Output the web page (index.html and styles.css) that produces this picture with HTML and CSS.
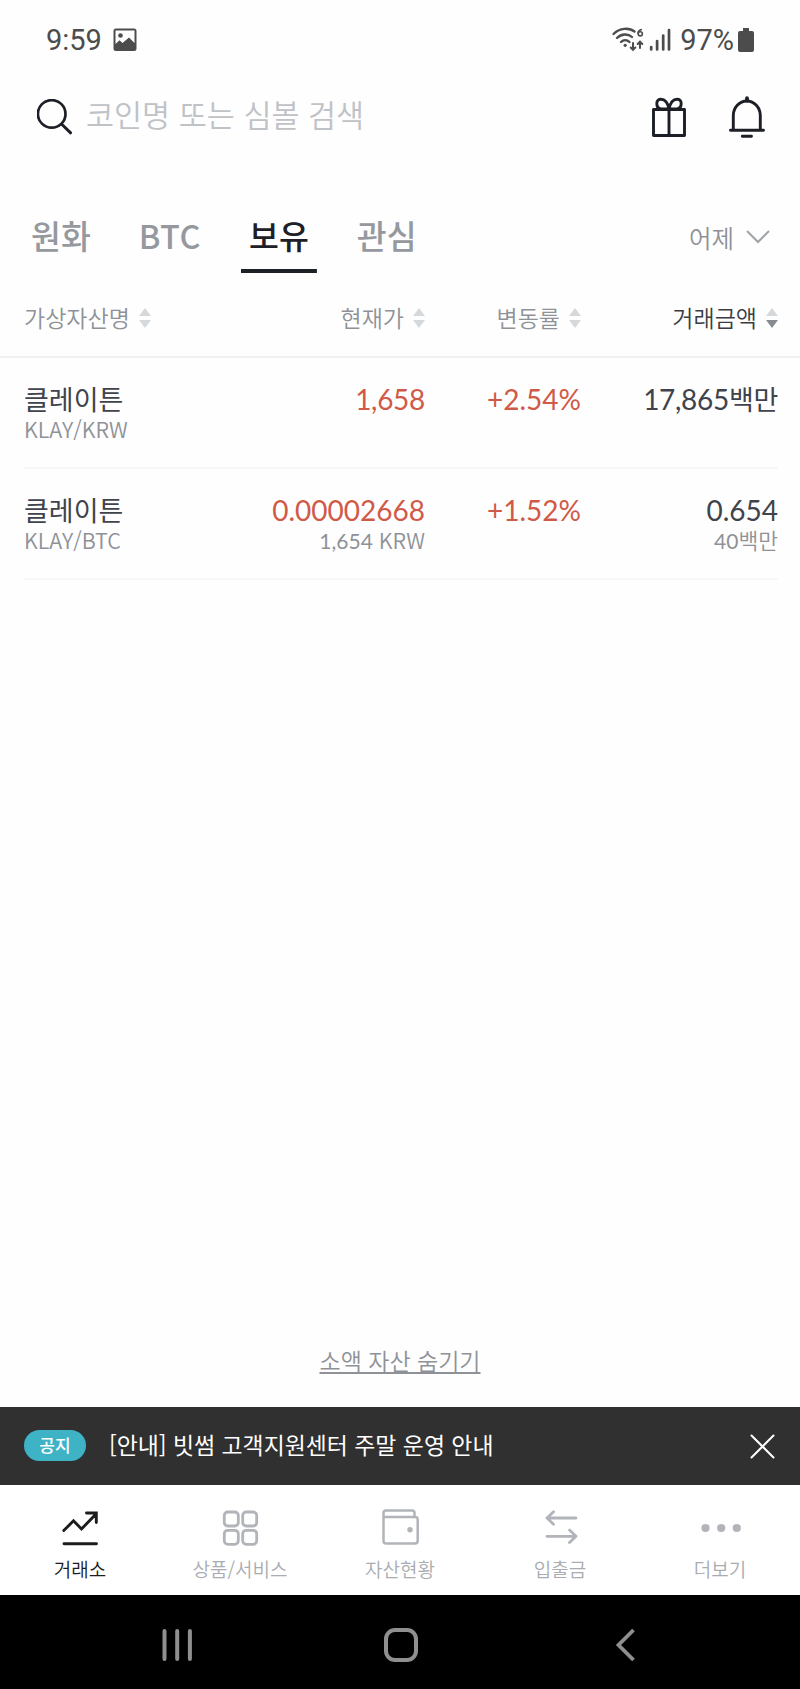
FILE: index.html
```html
<!DOCTYPE html>
<html lang="ko">
<head>
    <meta charset="UTF-8">
    <meta name="viewport" content="width=device-width, initial-scale=1.0">
    <title>거래소</title>
    <link rel="stylesheet" href="styles.css">
</head>
<body>
    <div class="app">
        <!-- Status bar -->
        <div class="status-bar">
            <span class="clock">9:59</span>
            <svg class="status-image" width="24" height="24" viewBox="0 0 24 24">
                <path fill="#4c4c4c" fill-rule="evenodd" d="M3 .5h18A2.500 2.500 0 0 1 23.500 3v17.500A2.500 2.500 0 0 1 21 23H3A2.500 2.500 0 0 1 .5 20.500V3A2.500 2.500 0 0 1 3 .5zM2.500 2.500v13.500l4-3.700 3 2.700 6.500-5.500 5.500 5.500V2.500z"/>
                <circle cx="7.500" cy="7.500" r="2.300" fill="#4c4c4c"/>
            </svg>
            <div class="status-right">
                <svg width="32" height="26" viewBox="0 0 32 26" fill="none" stroke="#4c4c4c" stroke-width="2.300" stroke-linecap="round">
                    <path d="M1.500 7C7.500 .5 17.500 .5 22.500 4.500M5 11C9.500 6.500 16 6.500 20 10M9 15c2.500-2.600 6-2.600 8.500 0"/>
                    <circle cx="13.200" cy="18.300" r="1.600" fill="#4c4c4c" stroke="none"/>
                    <path stroke-width="2" d="M21 16v6.500M18.700 20.500l2.300 2.300 2.300-2.300M28 21v-6.500M25.700 17l2.300-2.300 2.300 2.300"/>
                    <path stroke-width="1.600" d="M29.300 2.500c-2 .5-3.300 2.200-3.300 4"/>
                    <circle cx="28.300" cy="6.800" r="2.100" stroke-width="1.600"/>
                </svg>
                <svg class="signal" width="22" height="24" viewBox="0 0 22 24" stroke="#4c4c4c" stroke-width="2.700" stroke-linecap="round">
                    <path d="M2.200 19v2.500M8.100 13v8.500M14.200 7.500v14M20 2v19.500"/>
                </svg>
                <span class="battery-text">97%</span>
                <svg class="battery" width="16" height="24" viewBox="0 0 16 24" fill="#4c4c4c">
                    <path d="M5 0h6v3h3a2 2 0 0 1 2 2v17a2 2 0 0 1-2 2H2a2 2 0 0 1-2-2V5a2 2 0 0 1 2-2h3z"/>
                </svg>
            </div>
        </div>

        <!-- Search -->
        <div class="search-bar">
            <svg width="36" height="36" viewBox="0 0 36 36" fill="none" stroke="#1c1f26" stroke-width="2.700" stroke-linecap="round">
                <circle cx="14.700" cy="14.900" r="13.800"/>
                <path stroke-width="3" d="M25 25.500l8.600 8.300"/>
            </svg>
            <span class="search-text">코인명 또는 심볼 검색</span>
            <svg class="gift" width="34" height="40" viewBox="0 0 34 40" fill="none" stroke="#1c1f26" stroke-width="2.900" stroke-linejoin="round">
                <rect x="1.500" y="12.500" width="31" height="26"/>
                <path d="M17 12v26M16.500 12H9C3.500 11 3.500 2.500 8.500 2.200 13 2 16 6 16.800 12M17.500 12H25c5.500-1 5.500-9.500.5-9.800-4.500-.2-7.500 3.800-8.300 9.800"/>
            </svg>
            <svg class="bell" width="36" height="42" viewBox="0 0 36 42" fill="none" stroke="#1c1f26" stroke-width="2.900" stroke-linecap="round">
                <path d="M4.300 34V19.500a13.500 14.500 0 0 1 27 0V34M1.500 34.300h33M13.300 40.200h9.200"/>
                <path stroke-width="3.800" d="M18 2.200v2.500"/>
            </svg>
        </div>

        <!-- Market tabs -->
        <div class="tabs">
            <span class="tab">원화</span>
            <span class="tab latin">BTC</span>
            <span class="tab active">보유</span>
            <span class="tab">관심</span>
            <div class="period">
                어제
                <svg width="24" height="14" viewBox="0 0 24 14" fill="none" stroke="#a0a4a8" stroke-width="2">
                    <path d="M1 1l11 11L23 1"/>
                </svg>
            </div>
        </div>

        <!-- Coin list -->
        <div class="list-head grid">
            <div class="head-cell left">가상자산명 <span class="sort"></span></div>
            <div class="head-cell">현재가 <span class="sort"></span></div>
            <div class="head-cell">변동률 <span class="sort"></span></div>
            <div class="head-cell sorted">거래금액 <span class="sort"></span></div>
        </div>
        <div class="list">
            <div class="coin grid">
                <div class="cell left">
                    <div class="name">클레이튼</div>
                    <div class="sub">KLAY/KRW</div>
                </div>
                <div class="cell"><div class="num up tight">1,658</div></div>
                <div class="cell"><div class="num up">+2.54%</div></div>
                <div class="cell"><div class="num tight">17,865<span class="unit">백만</span></div></div>
            </div>
            <div class="coin grid">
                <div class="cell left">
                    <div class="name">클레이튼</div>
                    <div class="sub">KLAY/BTC</div>
                </div>
                <div class="cell">
                    <div class="num up">0.00002668</div>
                    <div class="sub"><span class="sub-num">1,654</span> KRW</div>
                </div>
                <div class="cell"><div class="num up">+1.52%</div></div>
                <div class="cell">
                    <div class="num">0.654</div>
                    <div class="sub"><span class="sub-num">40</span>백만</div>
                </div>
            </div>
        </div>

        <div class="hide-small"><span>소액 자산 숨기기</span></div>

        <!-- Notice -->
        <div class="notice">
            <span class="badge">공지</span>
            <span class="notice-text">[안내] 빗썸 고객지원센터 주말 운영 안내</span>
            <svg width="26" height="26" viewBox="0 0 26 26" stroke="#fff" stroke-width="2" stroke-linecap="round">
                <path d="M1.500 2.500l22 22M23.500 2.500l-22 22"/>
            </svg>
        </div>

        <!-- Bottom menu -->
        <div class="menu">
            <div class="menu-item active">
                <svg width="40" height="40" viewBox="0 0 40 40" fill="none" stroke="#1d1d1f" stroke-width="2.900" stroke-linecap="round">
                    <path d="M3.800 22.500l9.700-9.700 8 8.200L36 6M26.500 5H36.300v9.500M4 35.700h32.500"/>
                </svg>
                <span>거래소</span>
            </div>
            <div class="menu-item">
                <svg width="40" height="40" viewBox="0 0 40 40" fill="none" stroke="#b1b4b9" stroke-width="2.800">
                    <rect x="4.300" y="4" width="14" height="14" rx="3.500"/>
                    <rect x="22.700" y="4" width="14" height="14" rx="3.500"/>
                    <rect x="4.300" y="22.300" width="14" height="14" rx="3.500"/>
                    <rect x="22.700" y="22.300" width="14" height="14" rx="3.500"/>
                </svg>
                <span>상품/서비스</span>
            </div>
            <div class="menu-item">
                <svg width="40" height="40" viewBox="0 0 40 40" fill="none" stroke="#b1b4b9" stroke-width="2.500">
                    <path d="M3.500 8v25q0 2.500 2.700 2.500h28.800q2.700 0 2.700-2.700V11.500q0-2.500-2.700-2.500H3.800M3.500 9V5q0-2.500 2.500-2.500h26q2.500 0 2.500 2.500v4"/>
                    <circle cx="30" cy="21.800" r="2.700" fill="#b1b4b9" stroke="none"/>
                </svg>
                <span>자산현황</span>
            </div>
            <div class="menu-item">
                <svg width="40" height="40" viewBox="0 0 40 40" fill="none" stroke="#b1b4b9" stroke-width="2.800" stroke-linecap="round" stroke-linejoin="round">
                    <path d="M36 10H7M13.500 3.800L7 10l6.500 6.300M7 28.300h29M29.500 22.100L36 28.300l-6.500 6.300"/>
                </svg>
                <span>입출금</span>
            </div>
            <div class="menu-item">
                <svg width="42" height="40" viewBox="0 0 42 40" fill="#b1b4b9">
                    <circle cx="6.500" cy="20" r="4.100"/>
                    <circle cx="22.200" cy="20" r="4.100"/>
                    <circle cx="37.800" cy="20" r="4.100"/>
                </svg>
                <span>더보기</span>
            </div>
        </div>

        <!-- System navigation -->
        <div class="system-nav">
            <svg width="32" height="34" viewBox="0 0 32 34" stroke="#8f8f8f" stroke-width="4" stroke-linecap="round">
                <path d="M3.500 3v28M16.200 3v28M28.900 3v28"/>
            </svg>
            <svg width="36" height="36" viewBox="0 0 36 36" fill="none" stroke="#8f8f8f" stroke-width="4">
                <rect x="3" y="3" width="30" height="30" rx="9"/>
            </svg>
            <svg width="20" height="34" viewBox="0 0 20 34" fill="none" stroke="#8f8f8f" stroke-width="3.800">
                <path d="M18.500 2L3.500 17l15 15"/>
            </svg>
        </div>
    </div>
</body>
</html>
```

FILE: styles.css
```css
* {
    box-sizing: border-box;
}

body {
    margin: 0;
    background: #fefefe;
    color: #40434b;
    font-family: "Noto Sans CJK KR", sans-serif;
}

svg {
    display: block;
    flex-shrink: 0;
}

.app {
    display: flex;
    flex-direction: column;
    width: 800px;
    height: 1689px;
}

/* Status bar */
.status-bar {
    display: flex;
    align-items: center;
    height: 78px;
    padding: 1px 46px 0;
    font-family: Roboto, sans-serif;
    font-size: 29px;
    color: #4c4c4c;
}

.clock {
    width: 67px;
}

.status-right {
    display: flex;
    align-items: center;
    margin-left: auto;
}

.signal {
    margin-left: 5px;
}

.battery-text {
    margin-left: 9px;
}

.battery {
    margin-left: 4px;
}

/* Search */
.search-bar {
    display: flex;
    align-items: center;
    height: 78px;
    padding: 0 35px 0 37px;
}

.search-text {
    margin: -7px auto 0 13px;
    font-size: 30.5px;
    font-weight: 350;
    color: #bfc2c6;
}

.bell {
    margin-left: 43px;
}

/* Tabs */
.tabs {
    display: flex;
    gap: 32px;
    height: 74px;
    margin-top: 43px;
    padding: 0 30px 0 23px;
}

.tab {
    height: 74px;
    padding: 0 8px;
    line-height: 72px;
    font-size: 32.5px;
    font-weight: 500;
    color: #95999e;
}

.tab.latin {
    letter-spacing: 0.5px;
}

.tab.active {
    color: #1d2026;
    background: linear-gradient(#1d2026, #1d2026) bottom / 100% 4px no-repeat;
}

.period {
    display: flex;
    align-items: center;
    gap: 12px;
    margin-left: auto;
    padding-top: 2px;
    font-size: 24.5px;
    font-weight: 350;
    color: #8e9297;
}

/* Coin list */
.grid {
    display: grid;
    grid-template-columns: 201px 200px 156px 1fr;
}

.list-head {
    height: 85px;
    padding: 5px 22px 0 24px;
    border-bottom: 2px solid #f0f0f0;
    font-size: 23px;
    font-weight: 350;
    color: #8e9297;
}

.head-cell {
    display: flex;
    align-items: center;
    justify-content: flex-end;
    gap: 9px;
}

.head-cell.left {
    justify-content: flex-start;
}

.head-cell.sorted {
    color: #3a3d42;
}

.sort {
    display: flex;
    flex-direction: column;
    gap: 4px;
    margin-top: 1px;
}

.sort::before,
.sort::after {
    content: "";
    border: 6.5px solid transparent;
}

.sort::before {
    border-top: 0;
    border-bottom: 8px solid #d6d9dc;
}

.sort::after {
    border-bottom: 0;
    border-top: 8px solid #d6d9dc;
}

.sorted .sort::after {
    border-top-color: #888b90;
}

.list {
    padding: 0 22px 0 24px;
}

.coin {
    height: 111px;
    padding-top: 24px;
    border-bottom: 2px solid #f8f8f8;
}

.cell {
    text-align: right;
    white-space: nowrap;
}

.cell.left {
    text-align: left;
}

.name,
.num {
    height: 34px;
    line-height: 34px;
    font-size: 27px;
}

.num {
    font-family: Lato, "Noto Sans CJK KR", sans-serif;
    font-size: 28px;
}

.num.tight {
    letter-spacing: -0.3px;
}

.num.up {
    color: #d05a48;
}

.unit {
    font-size: 27px;
}

.sub {
    height: 26px;
    line-height: 26px;
    font-size: 21.5px;
    font-weight: 350;
    color: #8e9297;
}

.sub-num {
    font-family: Lato, sans-serif;
    font-size: 21px;
    font-weight: 400;
}

.hide-small {
    margin-top: auto;
    height: 64px;
    text-align: center;
    font-size: 23px;
    font-weight: 350;
    line-height: 34px;
    color: #8e9297;
}

.hide-small span {
    text-decoration: underline;
    text-decoration-thickness: 2px;
    text-decoration-skip-ink: none;
    text-underline-offset: 2px;
}

/* Notice */
.notice {
    display: flex;
    align-items: center;
    height: 78px;
    padding: 0 24px;
    background: #303030;
    color: #fff;
}

.badge {
    width: 62px;
    height: 31px;
    margin-top: -1px;
    border-radius: 16px;
    background: #3fb3c6;
    font-size: 17px;
    font-weight: 500;
    line-height: 29px;
    text-align: center;
}

.notice-text {
    margin: -5px auto 0 23px;
    font-size: 22.9px;
}

/* Bottom menu */
.menu {
    display: flex;
    height: 110px;
    padding-top: 23px;
    background: #fff;
}

.menu-item {
    display: flex;
    flex-direction: column;
    align-items: center;
    gap: 7px;
    width: 160px;
    font-size: 19px;
    font-weight: 350;
    line-height: 28px;
    color: #a9acb1;
}

.menu-item.active {
    color: #1d1d1f;
}

/* System navigation */
.system-nav {
    display: flex;
    align-items: center;
    justify-content: space-between;
    height: 94px;
    padding: 5px 165px 0 161px;
    background: #000;
}

.system-nav svg:nth-child(2) {
    margin-right: 6px;
}
```
